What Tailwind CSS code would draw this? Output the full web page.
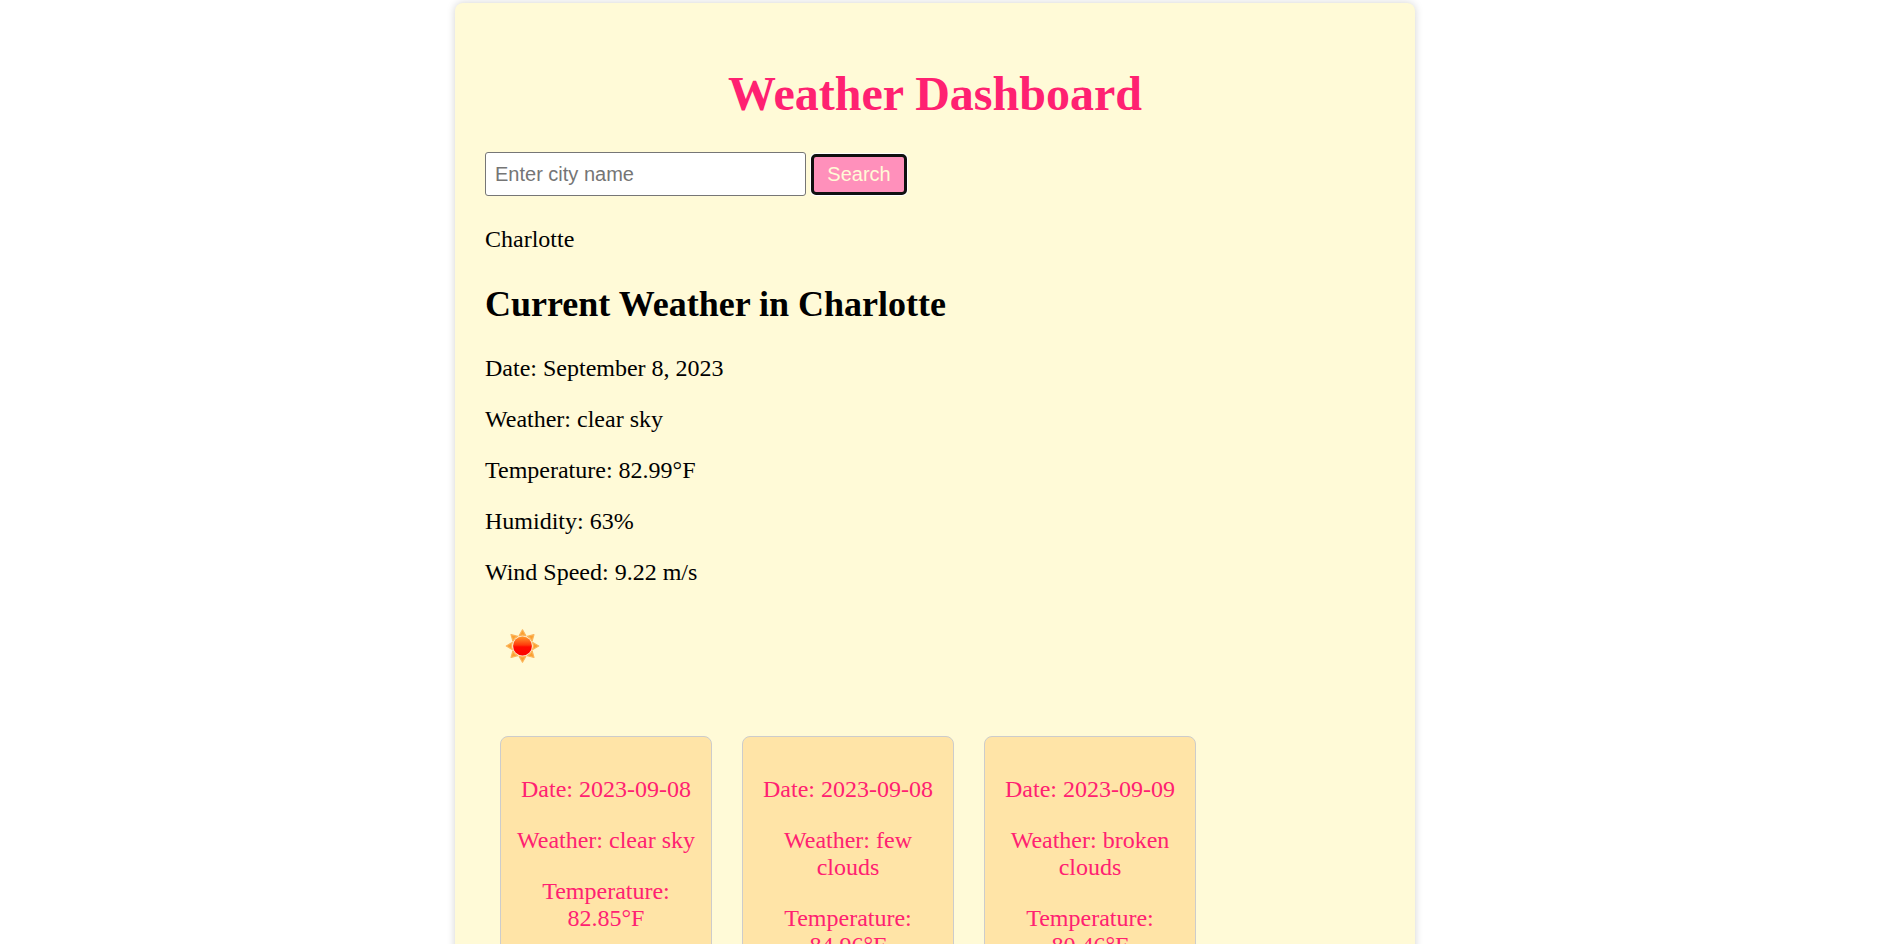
<!DOCTYPE html>
<html lang="en">
<head>
<meta charset="utf-8">
<meta name="viewport" content="width=device-width, initial-scale=1">
<title>Weather Dashboard</title>
<script src="https://cdn.jsdelivr.net/npm/@tailwindcss/browser@4"></script>
</head>
<body class="bg-white pt-[3px] pr-2 font-['Liberation_Serif',serif] text-2xl/[27px] text-black">
<main class="mx-auto max-w-[960px] rounded-lg bg-[#fffad7] p-[30px] shadow-[0_0_8px_rgba(0,0,0,0.18)]">
  <h1 class="mt-[33px] mb-[31px] text-center text-5xl/[55px] font-bold text-[#ff2171]">Weather Dashboard</h1>

  <form class="mb-[30px] flex items-center gap-[5px] font-['Liberation_Sans',sans-serif] text-xl/6" onsubmit="return false">
    <input type="text" aria-label="City name" placeholder="Enter city name" class="h-11 w-[321px] rounded-[3px] border border-[#767676] bg-white px-[9px] placeholder:text-[#757575]">
    <button type="submit" class="h-[41px] w-[96px] rounded-[5px] border-3 border-[#101010] bg-[#ff90bb] text-center text-[#fffad7] shadow-[0_0_0_1px_#fff]">Search</button>
  </form>

  <p>Charlotte</p>

  <section>
    <h2 class="mt-[31px] mb-[30px] text-4xl/[41px] font-bold">Current Weather in Charlotte</h2>
    <div class="flex flex-col gap-6">
      <p>Date: September 8, 2023</p>
      <p>Weather: clear sky</p>
      <p>Temperature: 82.99°F</p>
      <p>Humidity: 63%</p>
      <p>Wind Speed: 9.22 m/s</p>
    </div>
    <svg class="mt-[22px] size-[75px]" viewBox="0 0 75 75" role="img" aria-label="Clear sky">
      <defs>
        <linearGradient id="disc" x1="0" y1="0" x2="0" y2="1">
          <stop offset="0" stop-color="#ff9a28"/>
          <stop offset=".2" stop-color="#ff6e1e"/>
          <stop offset=".45" stop-color="#ff3a0a"/>
          <stop offset=".55" stop-color="#ff0a00"/>
          <stop offset="1" stop-color="#fa0500"/>
        </linearGradient>
        <path id="ray" d="M37.5 21.8 L40.9 27.8 Q37.5 26.4 34.1 27.8 Z" fill="#fba030" stroke="#fbb45a" stroke-width="1.2" stroke-linejoin="round"/>
      </defs>
      <use href="#ray"/>
      <use href="#ray" transform="rotate(45 37.5 38)"/>
      <use href="#ray" transform="rotate(90 37.5 38)"/>
      <use href="#ray" transform="rotate(135 37.5 38)"/>
      <use href="#ray" transform="rotate(180 37.5 38)"/>
      <use href="#ray" transform="rotate(225 37.5 38)"/>
      <use href="#ray" transform="rotate(270 37.5 38)"/>
      <use href="#ray" transform="rotate(315 37.5 38)"/>
      <circle cx="37.5" cy="38" r="10" fill="#ffd8c0"/>
      <circle cx="37.5" cy="38" r="9.4" fill="url(#disc)"/>
    </svg>
  </section>

  <section aria-label="Forecast" class="mx-[15px] mt-[53px] flex flex-wrap gap-[30px] text-center text-[#ff2171]">
    <article class="flex w-[212px] flex-col gap-6 rounded-lg border border-[#ccc] bg-[#ffe4a7] px-[15px] py-[39px]">
      <p>Date: 2023-09-08</p>
      <p>Weather: clear sky</p>
      <p>Temperature: 82.85°F</p>
    </article>
    <article class="flex w-[212px] flex-col gap-6 rounded-lg border border-[#ccc] bg-[#ffe4a7] px-[15px] py-[39px]">
      <p>Date: 2023-09-08</p>
      <p>Weather: few clouds</p>
      <p>Temperature: 84.96°F</p>
    </article>
    <article class="flex w-[212px] flex-col gap-6 rounded-lg border border-[#ccc] bg-[#ffe4a7] px-[15px] py-[39px]">
      <p>Date: 2023-09-09</p>
      <p>Weather: broken clouds</p>
      <p>Temperature: 80.46°F</p>
    </article>
  </section>
</main>
</body>
</html>
